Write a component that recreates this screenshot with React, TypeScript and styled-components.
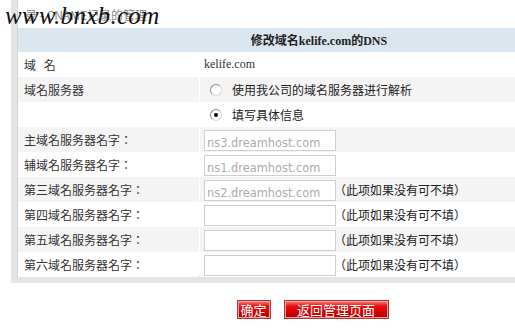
import React from 'react'
import styled, { createGlobalStyle } from 'styled-components'

const GlobalStyle = createGlobalStyle`
  html, body {
    margin: 0;
    padding: 0;
    background: #fff;
    overflow: hidden;
  }
  body {
    font-family: "Liberation Serif", "Noto Sans CJK SC", serif;
    font-size: 12px;
    color: #333;
    text-spacing-trim: space-all;
  }
`

const Viewport = styled.div`
  width: 100vw;
  overflow: hidden;
`

const Page = styled.div`
  width: 640px;
  padding-left: 11px;
`

const Panel = styled.div`
  width: 603px;
  border-left: 6px solid #e4e4e4;
  border-bottom: 6px solid #e4e4e4;
  box-shadow: inset 1px 0 0 #d4d4d4, inset 0 -1px 0 #d4d4d4;
`

const TopBar = styled.div`
  position: relative;
  height: 28px;
`

const Crumb = styled.div`
  padding: 8px 0 0 8px;
  color: #8a8a8a;
  font-family: "Noto Sans CJK SC", sans-serif;
  font-size: 12px;
  line-height: 14px;
`

const Watermark = styled.div`
  position: absolute;
  left: -12px;
  top: 2px;
  font-family: "Liberation Serif", serif;
  font-style: italic;
  font-size: 25px;
  color: #111;
  letter-spacing: 0.3px;
`

const Table = styled.div`
  display: grid;
  grid-template-columns: 181px 1fr;
  column-gap: 1px;
  margin-left: 1px;
`

const Header = styled.div`
  grid-column: 1 / 3;
  height: 24px;
  background: #dae5ee;
  display: flex;
  align-items: center;
  justify-content: center;
  font-weight: bold;
  font-size: 12px;
  color: #222;
`

const Cell = styled.div<{ $shade: boolean }>`
  height: 25px;
  display: flex;
  align-items: center;
  background: ${({ $shade }) => ($shade ? '#f4f4f4' : '#fff')};
`

const Label = styled(Cell)`
  padding-left: 6px;
  font-family: "Noto Sans CJK TC", "Noto Sans CJK SC", sans-serif;
  color: #333;
  word-spacing: 5px;
`

const Value = styled(Cell)`
  padding-left: 4px;
  gap: 2px;
`

const RadioRow = styled.label`
  display: flex;
  align-items: center;
  gap: 10px;
  padding-left: 6px;
  font-family: "Noto Sans CJK SC", sans-serif;
  color: #222;
`

const RadioDot = styled.span<{ $on: boolean }>`
  width: 10px;
  height: 10px;
  border-radius: 50%;
  border: 1px solid #8a8a8a;
  border-right-color: #d8d8d8;
  border-bottom-color: #d8d8d8;
  background: #fff;
  display: flex;
  align-items: center;
  justify-content: center;
  &::after {
    content: '';
    width: 4px;
    height: 4px;
    border-radius: 50%;
    background: ${({ $on }) => ($on ? '#000' : 'transparent')};
  }
`

const TextBox = styled.div`
  box-sizing: border-box;
  width: 132px;
  height: 21px;
  margin-top: 2px;
  border: 1px solid #cfcfcf;
  background: #fff;
  padding: 6px 0 0 2px;
  font-family: "DejaVu Sans", sans-serif;
  font-size: 11.4px;
  line-height: 13px;
  color: #ababab;
  overflow: hidden;
  white-space: nowrap;
`

const Note = styled.span`
  font-family: "Noto Sans CJK TC", "Noto Sans CJK SC", sans-serif;
  color: #222;
  margin-left: -4px;
`

const Buttons = styled.div`
  width: 603px;
  display: flex;
  justify-content: center;
  gap: 13px;
  margin-top: 17px;
`

const RedButton = styled.button<{ $wide?: boolean }>`
  height: 19px;
  width: ${({ $wide }) => ($wide ? '105px' : '34px')};
  padding: 0;
  border: 1px solid #a83a3a;
  box-shadow: inset 0 0 0 1px #f0a0a0;
  background: linear-gradient(#ff8080 0%, #e81010 30%, #d00000 70%, #b80000 100%);
  color: #fff;
  font-family: "Noto Sans CJK SC", sans-serif;
  font-size: 13px;
  line-height: 16px;
`

type Row = { label: string; host?: string; note?: boolean }

const rows: Row[] = [
  { label: '主域名服务器名字：', host: 'ns3.dreamhost.com' },
  { label: '辅域名服务器名字：', host: 'ns1.dreamhost.com' },
  { label: '第三域名服务器名字：', host: 'ns2.dreamhost.com', note: true },
  { label: '第四域名服务器名字：', host: '', note: true },
  { label: '第五域名服务器名字：', host: '', note: true },
  { label: '第六域名服务器名字：', host: '', note: true },
]

const App: React.FC = () => {
  return (
    <Viewport>
      <GlobalStyle />
      <Page>
        <Panel>
          <TopBar>
            <Crumb>录 - CNAME记录的管理</Crumb>
            <Watermark>www.bnxb.com</Watermark>
          </TopBar>
          <Table>
            <Header>修改域名kelife.com的DNS</Header>

            <Label $shade={false}>域 名</Label>
            <Value $shade={false}>kelife.com</Value>

            <Label $shade={true}>域名服务器</Label>
            <Value $shade={true}>
              <RadioRow><RadioDot $on={false} />使用我公司的域名服务器进行解析</RadioRow>
            </Value>

            <Label $shade={false}></Label>
            <Value $shade={false}>
              <RadioRow><RadioDot $on={true} />填写具体信息</RadioRow>
            </Value>

            {rows.map((r, i) => {
              const shade = i % 2 === 0
              return (
                <React.Fragment key={r.label}>
                  <Label $shade={shade}>{r.label}</Label>
                  <Value $shade={shade}>
                    <TextBox>{r.host}</TextBox>
                    {r.note && <Note>（此项如果没有可不填）</Note>}
                  </Value>
                </React.Fragment>
              )
            })}
          </Table>
        </Panel>
        <Buttons>
          <RedButton>确定</RedButton>
          <RedButton $wide>返回管理页面</RedButton>
        </Buttons>
      </Page>
    </Viewport>
  )
}

export default App
